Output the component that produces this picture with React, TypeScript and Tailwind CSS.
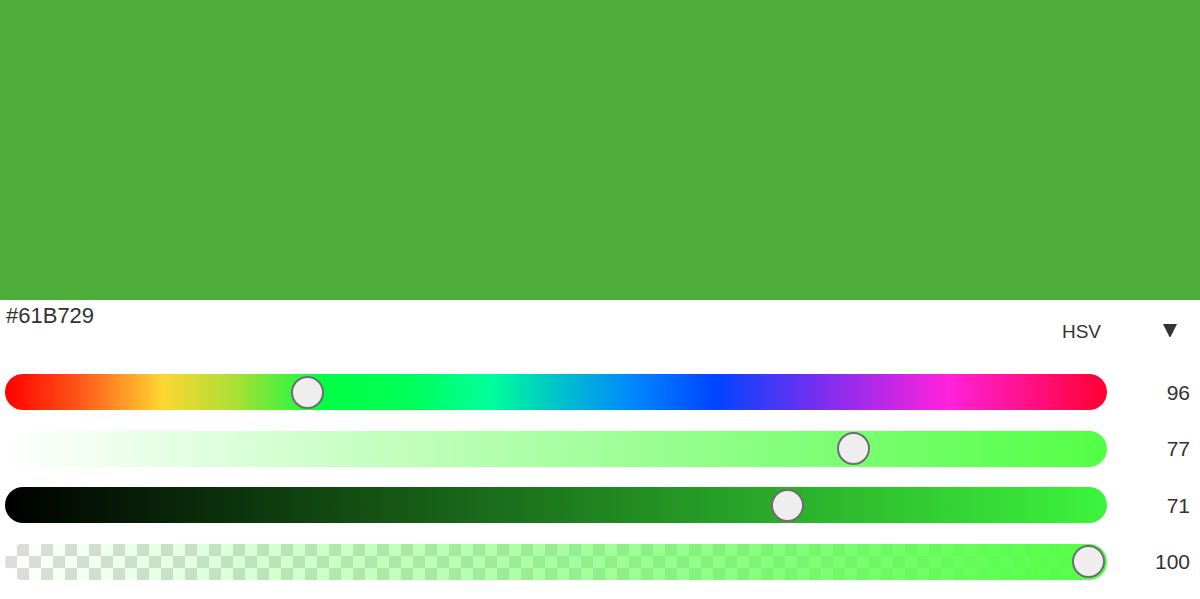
import React from "react";

type Row = {
  value: string;
  frac: number;
  bar: string;
  alpha?: boolean;
};

const rows: Row[] = [
  {
    value: "96",
    frac: 0.268,
    bar: "bg-[linear-gradient(to_right,#ff0000_0%,#ff5a1a_7%,#ffd633_14.3%,#a8e034_21%,#00ff44_29%,#00ff55_36%,#00ff99_44%,#00c4c8_50%,#0088ff_57%,#0044ff_64.5%,#7a2ef0_74%,#ff22dd_85.5%,#ff0033_100%)]",
  },
  {
    value: "77",
    frac: 0.778,
    bar: "bg-[linear-gradient(to_right,#ffffff_0%,#52ff45_100%)]",
  },
  {
    value: "71",
    frac: 0.717,
    bar: "bg-[linear-gradient(to_right,#000000_0%,#3cf53c_100%)]",
  },
  {
    value: "100",
    frac: 0.998,
    bar: "",
    alpha: true,
  },
];

function Slider({ row }: { row: Row }) {
  const left = row.frac * (1102 - 33);
  return (
    <div className="relative h-9 w-[1102px] ml-[5px] rounded-full">
      {row.alpha ? (
        <div className="absolute inset-0 rounded-full overflow-hidden bg-[repeating-conic-gradient(#dcdcdc_0_25%,#ffffff_0_50%)] bg-[length:24px_24px]">
          <div className="absolute inset-0 bg-[linear-gradient(to_right,rgba(82,255,69,0)_0%,#52ff45_100%)]" />
        </div>
      ) : (
        <div className={`absolute inset-0 rounded-full ${row.bar}`} />
      )}
      <div
        className="absolute top-[1.5px] w-[33px] h-[33px] rounded-full bg-[#eeeeee] border-2 border-[#6e6e6e]"
        style={{ left: `${left}px` }}
      />
    </div>
  );
}

export default function App() {
  return (
    <div className="w-[1200px] h-[599px] bg-white overflow-hidden font-['Liberation_Sans',Arial,sans-serif] text-[#333333]">
      <div className="h-[300px] bg-[#4fad39]" />
      <div className="h-[74px] flex justify-between items-start">
        <div className="pl-[6px] pt-[5px] text-[22px] leading-none">#61B729</div>
        <div className="flex items-start pt-[22px] pr-[23px]">
          <div className="text-[19px] leading-none">HSV</div>
          <svg className="ml-[62px] mt-[1px]" width="14" height="14" viewBox="0 0 14 14">
            <polygon points="0,1 14,1 7,15" fill="#333333" />
          </svg>
        </div>
      </div>
      <div className="flex flex-col gap-[20.5px]">
        {rows.map((r) => (
          <div key={r.value} className="flex items-center">
            <Slider row={r} />
            <div className="flex-1 text-right pr-[10px] text-[21px] leading-none">{r.value}</div>
          </div>
        ))}
      </div>
    </div>
  );
}
